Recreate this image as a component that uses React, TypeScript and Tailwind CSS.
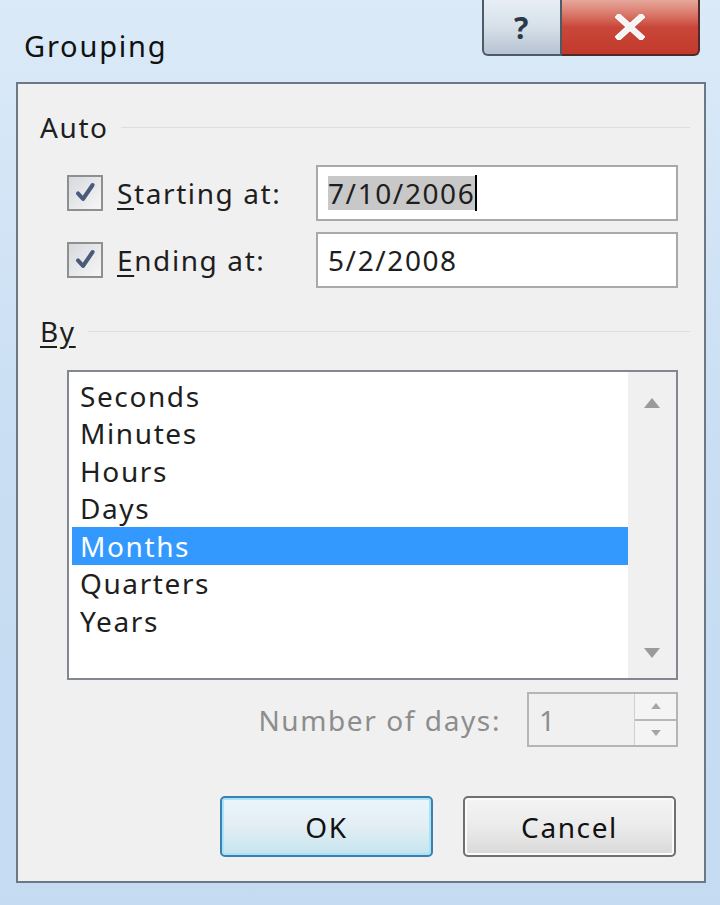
import { useState } from "react";

// Windows 7 style "Grouping" dialog (pivot table grouping)
const items = ["Seconds", "Minutes", "Hours", "Days", "Months", "Quarters", "Years"];

function Check() {
  return (
    <div className="flex h-[36px] w-[36px] items-center justify-center border-2 border-[#8e8f8f] bg-gradient-to-br from-[#d6d9de] to-[#f6f6f6]">
      <svg className="h-[24px] w-[24px]" viewBox="0 0 12 12" fill="none">
        <path d="M2.5 6.2 5 9 9.8 2" stroke="#4a5a7a" strokeWidth="2" strokeLinecap="round" strokeLinejoin="round" />
      </svg>
    </div>
  );
}

function Legend({ label, underline }: { label: string; underline?: boolean }) {
  return (
    <div className="flex h-[30px] items-center">
      <span className={"text-[28px] leading-none text-[#1e1e1e] " + (underline ? "underline underline-offset-4" : "")}>{label}</span>
      <div className="ml-[12px] h-px flex-1 bg-[#d5dfe5]" />
    </div>
  );
}

export default function App() {
  const [selected, setSelected] = useState("Months");

  return (
    <div
      className="flex h-[905px] w-[720px] flex-col overflow-hidden bg-gradient-to-b from-[#dbeaf8] via-[#c9def3] to-[#c4dbf1] tracking-[1.6px]"
      style={{ fontFamily: '"Noto Sans", "Open Sans", sans-serif' }}
    >
      {/* Title bar */}
      <div className="flex h-[82px] shrink-0">
        <div className="pl-[24px] pt-[24px] text-[29px] tracking-[1.8px] text-[#111]">Grouping</div>
        <div className="ml-auto mr-[20px] flex h-[56px]">
          <div className="flex w-[80px] items-center justify-center rounded-bl-[6px] border-2 border-t-0 border-[#4e5a66] bg-gradient-to-b from-[#e8eef4] via-[#d6e0ea] to-[#b6c3d1] text-[30px] font-bold text-[#2c3a48]">
            ?
          </div>
          <div className="flex w-[138px] items-center justify-center rounded-br-[6px] border-2 border-l-0 border-t-0 border-[#4e2a2a] bg-gradient-to-b from-[#e6a89c] via-[#c9473a] to-[#c23a2a]">
            <svg className="h-[26px] w-[30px]" viewBox="0 0 15 13">
              <path d="M2 1.5 13 11.5M13 1.5 2 11.5" stroke="#fff" strokeWidth="3.2" strokeLinecap="square" />
              <path d="M2 1.5 13 11.5M13 1.5 2 11.5" stroke="#f4f4f4" strokeWidth="2" strokeLinecap="square" />
            </svg>
          </div>
        </div>
      </div>

      {/* Client area */}
      <div className="ml-[16px] mr-[14px] flex h-[801px] shrink-0 flex-col border-2 border-[#6c7884] bg-[#f0f0f0] pl-[22px] pr-[14px] text-[#1e1e1e]">
        <div className="mt-[28px]">
          <Legend label="Auto" />
        </div>

        <div className="mt-[23px] flex h-[56px] items-center">
          <div className="ml-[27px]">
            <Check />
          </div>
          <span className="ml-[14px] text-[28px]">
            <span className="underline underline-offset-4">S</span>tarting at:
          </span>
          <div className="ml-auto mr-[12px] flex h-[56px] w-[362px] items-center border-2 border-[#a9a9a9] bg-white pl-[10px]">
            <span className="bg-[#c8c8c8] text-[28px] leading-[34px]">7/10/2006</span>
            <span className="h-[36px] w-[2px] bg-black" />
          </div>
        </div>

        <div className="mt-[11px] flex h-[56px] items-center">
          <div className="ml-[27px]">
            <Check />
          </div>
          <span className="ml-[14px] text-[28px]">
            <span className="underline underline-offset-4">E</span>nding at:
          </span>
          <div className="ml-auto mr-[12px] flex h-[56px] w-[362px] items-center border-2 border-[#a9a9a9] bg-white pl-[10px] text-[28px]">
            5/2/2008
          </div>
        </div>

        <div className="mt-[28px]">
          <Legend label="By" underline />
        </div>

        {/* List box */}
        <div className="ml-[27px] mr-[12px] mt-[24px] flex h-[310px] border-2 border-[#828790] bg-white">
          <div className="flex-1 pl-[3px] pt-[5px]">
            {items.map((it) => (
              <div
                key={it}
                onClick={() => setSelected(it)}
                className={
                  "flex h-[37.5px] items-center pl-[8px] text-[28px] " +
                  (selected === it ? "bg-[#3399ff] text-white" : "")
                }
              >
                {it}
              </div>
            ))}
          </div>
          <div className="flex w-[48px] flex-col items-center justify-between bg-[#f0f0f0] pb-[20px] pt-[26px]">
            <svg className="h-[10px] w-[16px]" viewBox="0 0 8 5">
              <path d="M4 0 8 5H0z" fill="#9a9a9a" />
            </svg>
            <svg className="h-[10px] w-[16px]" viewBox="0 0 8 5">
              <path d="M0 0h8L4 5z" fill="#9a9a9a" />
            </svg>
          </div>
        </div>

        {/* Number of days */}
        <div className="mr-[12px] mt-[12px] flex h-[55px] items-center justify-end">
          <span className="text-[28px] text-[#8d8d8d]">Number of days:</span>
          <div className="ml-[26px] flex h-[55px] w-[151px] border-2 border-[#b5b5b5] bg-[#f0f0f0]">
            <div className="flex flex-1 items-center pl-[10px] text-[28px] text-[#8d8d8d]">1</div>
            <div className="flex w-[42px] flex-col border-l border-[#d0d0d0]">
              <div className="flex flex-1 items-center justify-center border-b-2 border-[#b8b8b8] bg-[#f4f4f4]">
                <svg className="h-[6px] w-[10px]" viewBox="0 0 8 5">
                  <path d="M4 0 8 5H0z" fill="#a5a5a5" />
                </svg>
              </div>
              <div className="flex flex-1 items-center justify-center bg-[#f4f4f4]">
                <svg className="h-[6px] w-[10px]" viewBox="0 0 8 5">
                  <path d="M0 0h8L4 5z" fill="#a5a5a5" />
                </svg>
              </div>
            </div>
          </div>
        </div>

        {/* Buttons */}
        <div className="mr-[14px] mt-[49px] flex justify-end gap-[30px]">
          <button className="flex h-[61px] w-[213px] items-center justify-center rounded-[5px] border-2 border-[#3c7fb1] bg-gradient-to-b from-[#eaf6fb] via-[#e2eef4] to-[#c5e4ee] text-[28px] text-[#111] shadow-[inset_0_0_0_2px_#a8e4f5]">
            OK
          </button>
          <button className="flex h-[61px] w-[213px] items-center justify-center rounded-[5px] border-2 border-[#707070] bg-gradient-to-b from-[#f4f4f4] via-[#ebebeb] to-[#d8d8d8] text-[28px] text-[#111] shadow-[inset_0_0_0_2px_#fbfbfb]">
            Cancel
          </button>
        </div>
      </div>
    </div>
  );
}
